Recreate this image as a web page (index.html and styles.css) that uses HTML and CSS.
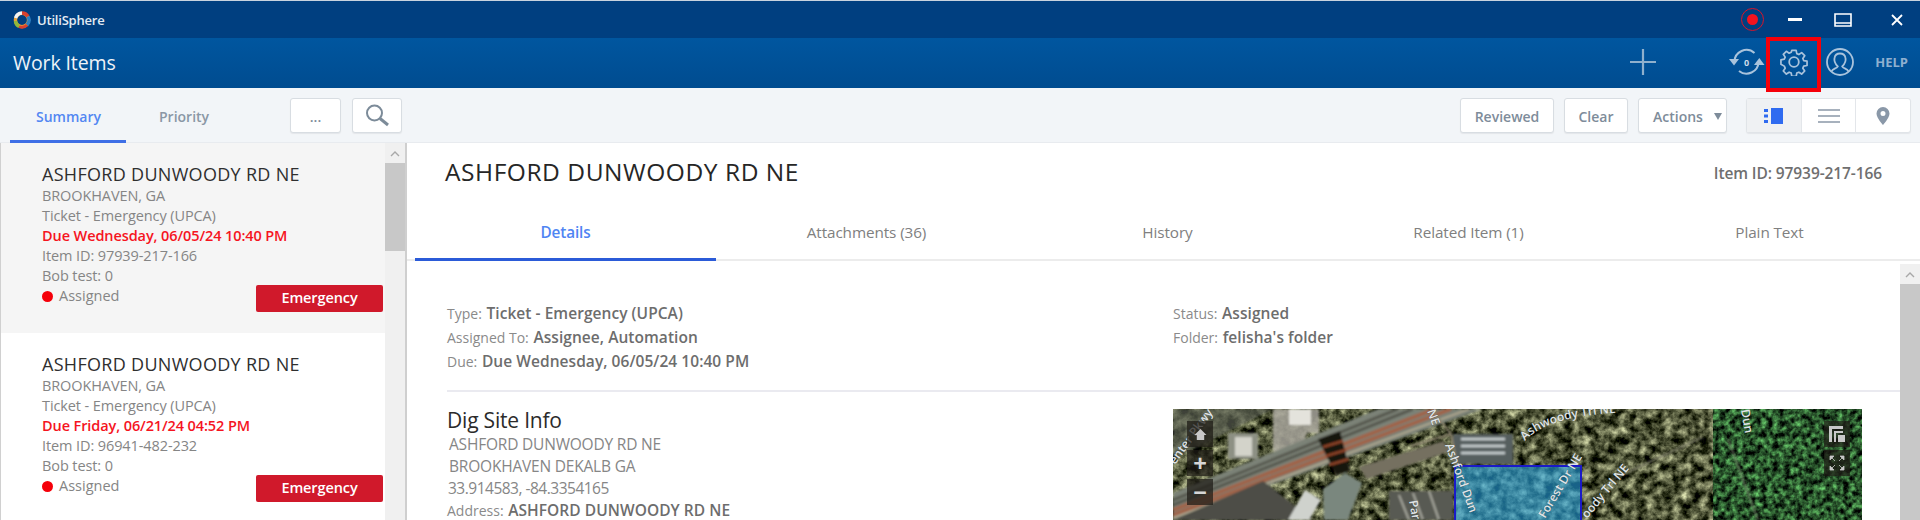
FILE: index.html
```html
<!DOCTYPE html>
<html lang="en">
<head>
<meta charset="utf-8">
<title>Work Items</title>
<link rel="stylesheet" href="styles.css">
</head>
<body>
<div class="app">
  <div class="titlebar">
    <svg class="logo" viewBox="0 0 20 20" width="20" height="20">
      <circle cx="10" cy="10" r="6.6" fill="none" stroke="#e8a33a" stroke-width="3.4"/>
      <path d="M3.6 8A7 7 0 0 1 10 3" fill="none" stroke="#f4f4f4" stroke-width="3.4"/>
      <path d="M10 3A7 7 0 0 1 16 6.5" fill="none" stroke="#d9402e" stroke-width="3.4"/>
      <path d="M16 6.5A7 7 0 0 1 15 15" fill="none" stroke="#2a7fc4" stroke-width="3.4"/>
      <path d="M15 15A7 7 0 0 1 7 16.5" fill="none" stroke="#d9402e" stroke-width="3"/>
      <path d="M7 16.5A7 7 0 0 1 3.4 11" fill="none" stroke="#8fb83a" stroke-width="3.4"/>
    </svg>
    <span class="brand">UtiliSphere</span>
    <span class="rec"><span class="rec-dot"></span></span>
    <span class="win-min"></span>
    <svg class="win-max" viewBox="0 0 18 14" width="18" height="14"><path d="M1 1h16v12H1zM1 10h16" fill="none" stroke="#fff" stroke-width="1.6"/></svg>
    <svg class="win-close" viewBox="0 0 12 12" width="12" height="12"><path d="M1 1l10 10M11 1L1 11" stroke="#fff" stroke-width="1.8" fill="none"/></svg>
  </div>

  <div class="header">
    <h1 class="page-title">Work Items</h1>
    <svg class="ico-plus" viewBox="0 0 26 26" width="26" height="26"><path d="M13 0v26M0 13h26" stroke="#8fb0cd" stroke-width="2.2" fill="none"/></svg>
    <svg class="ico-sync" viewBox="0 0 36 28" width="36" height="28">
      <path d="M5.500 14A12 12 0 0 1 25.500 5" fill="none" stroke="#a9c3dc" stroke-width="2"/>
      <path d="M29.500 14A12 12 0 0 1 10 23" fill="none" stroke="#a9c3dc" stroke-width="2"/>
      <path d="M0 11h10l-5 6.500z" fill="#a9c3dc"/>
      <path d="M25 17h10.500l-5.200-7z" fill="#a9c3dc"/>
      <text x="17.500" y="17.500" class="sync-num">0</text>
    </svg>
    <svg class="ico-gear" viewBox="0 0 28 28" width="28" height="28">
      <path d="M11.600 1h4.800l.7 3.700 2.300 1 3.100-2.100 3.400 3.400-2.100 3.100 1 2.300 3.700.7v4.800l-3.700.7-1 2.300 2.100 3.100-3.400 3.400-3.100-2.100-2.300 1-.7 3.700h-4.800l-.7-3.700-2.300-1-3.100 2.100-3.400-3.400 2.100-3.100-1-2.300L-.5 16.400v-4.800l3.700-.7 1-2.300L2.100 5.500l3.400-3.400 3.100 2.100 2.300-1z" transform="translate(1.400 1.400) scale(.9)" fill="none" stroke="#a9c3dc" stroke-width="1.900" stroke-linejoin="round"/>
      <circle cx="14" cy="14" r="4.800" fill="none" stroke="#a9c3dc" stroke-width="1.800"/>
    </svg>
    <svg class="ico-user" viewBox="0 0 28 28" width="28" height="28">
      <circle cx="14" cy="14" r="13" fill="none" stroke="#a9c3dc" stroke-width="1.800"/>
      <path d="M5.500 23.500c1-3 5.500-3 6.300-5-3-3-3.800-6-3.300-8.500C9 7 11 5.500 14 5.500s5 1.500 5.500 4.500c.5 2.500-.3 5.500-3.300 8.500.8 2 5.300 2 6.300 5" fill="none" stroke="#a9c3dc" stroke-width="1.800"/>
    </svg>
    <span class="help">HELP</span>
    <span class="annot"></span>
  </div>

  <div class="toolbar">
    <div class="left-tabs">
      <span class="ltab ltab-on">Summary</span>
      <span class="ltab">Priority</span>
    </div>
    <button class="btn btn-more">...</button>
    <button class="btn btn-search">
      <svg viewBox="0 0 26 26" width="26" height="26"><circle cx="10.500" cy="10" r="7.500" fill="none" stroke="#7c8b99" stroke-width="2"/><path d="M16 15.500l8 6.500" stroke="#7c8b99" stroke-width="3" fill="none"/></svg>
    </button>
    <div class="tool-right">
      <button class="btn btn-rev">Reviewed</button>
      <button class="btn btn-clear">Clear</button>
      <button class="btn btn-act">Actions <span class="caret"></span></button>
      <div class="seg">
        <span class="seg-i seg-on">
          <svg viewBox="0 0 20 16" width="20" height="16"><path d="M0 1h4v3H0zM0 6.500h4v3H0zM0 12h4v3H0zM7 0h12v16H7z" fill="#2f6bf0"/></svg>
        </span>
        <span class="seg-i">
          <svg viewBox="0 0 22 14" width="22" height="14"><path d="M0 1h22M0 7h22M0 13h22" stroke="#8a98a8" stroke-width="1.600" fill="none"/></svg>
        </span>
        <span class="seg-i">
          <svg viewBox="0 0 14 18" width="14" height="18"><path d="M7 0a6.500 6.500 0 0 0-6.500 6.500C.5 11 7 18 7 18s6.500-7 6.500-11.500A6.500 6.500 0 0 0 7 0zm0 9a2.500 2.500 0 1 1 0-5 2.500 2.500 0 0 1 0 5z" fill="#8a98a8"/></svg>
        </span>
      </div>
    </div>
  </div>

  <div class="main">
    <aside class="list">
      <div class="list-items">
        <article class="item item-on">
          <div class="item-title">ASHFORD DUNWOODY RD NE</div>
          <div class="item-line">BROOKHAVEN, GA</div>
          <div class="item-line">Ticket - Emergency (UPCA)</div>
          <div class="item-line item-due">Due Wednesday, 06/05/24 10:40 PM</div>
          <div class="item-line">Item ID: 97939-217-166</div>
          <div class="item-line">Bob test: 0</div>
          <div class="item-foot">
            <span class="status"><i class="dot"></i>Assigned</span>
            <span class="badge">Emergency</span>
          </div>
        </article>
        <article class="item item-second">
          <div class="item-title">ASHFORD DUNWOODY RD NE</div>
          <div class="item-line">BROOKHAVEN, GA</div>
          <div class="item-line">Ticket - Emergency (UPCA)</div>
          <div class="item-line item-due">Due Friday, 06/21/24 04:52 PM</div>
          <div class="item-line">Item ID: 96941-482-232</div>
          <div class="item-line">Bob test: 0</div>
          <div class="item-foot">
            <span class="status"><i class="dot"></i>Assigned</span>
            <span class="badge">Emergency</span>
          </div>
        </article>
      </div>
      <div class="vscroll vscroll-list">
        <svg class="chev" viewBox="0 0 10 6" width="10" height="6"><path d="M1 5l4-4 4 4" fill="none" stroke="#a8a8a8" stroke-width="1.400"/></svg>
        <div class="thumb thumb-list"></div>
      </div>
    </aside>

    <section class="detail">
      <div class="detail-head">
        <h2 class="detail-title">ASHFORD DUNWOODY RD NE</h2>
        <span class="detail-id">Item ID: 97939-217-166</span>
      </div>
      <nav class="dtabs">
        <span class="dtab dtab-on">Details</span>
        <span class="dtab">Attachments (36)</span>
        <span class="dtab">History</span>
        <span class="dtab">Related Item (1)</span>
        <span class="dtab">Plain Text</span>
      </nav>
      <div class="dbody">
        <div class="dcontent">
          <div class="info">
            <div>
              <p class="kv">Type: <b>Ticket - Emergency (UPCA)</b></p>
              <p class="kv">Assigned To: <b>Assignee, Automation</b></p>
              <p class="kv">Due: <b>Due Wednesday, 06/05/24 10:40 PM</b></p>
            </div>
            <div>
              <p class="kv">Status: <b>Assigned</b></p>
              <p class="kv">Folder: <b>felisha's folder</b></p>
            </div>
          </div>
          <div class="site">
            <div class="site-info">
              <h3 class="site-title">Dig Site Info</h3>
              <p class="addr">ASHFORD DUNWOODY RD NE</p>
              <p class="addr">BROOKHAVEN DEKALB GA</p>
              <p class="addr addr-c">33.914583, -84.3354165</p>
              <p class="kv kv-addr">Address: <b>ASHFORD DUNWOODY RD NE</b></p>
            </div>
            <div class="map">
              <svg class="map-svg" viewBox="0 0 689 111" width="689" height="111">
                <defs>
                  <filter id="veg" x="0" y="0" width="100%" height="100%" color-interpolation-filters="sRGB">
                    <feTurbulence type="fractalNoise" baseFrequency="0.11" numOctaves="4" seed="11"/>
                    <feColorMatrix type="matrix" values="1.300 0 0 0 -0.340  1.300 0 0 0 -0.320  1.100 0 0 0 -0.330  0 0 0 0 1"/>
                  </filter>
                  <filter id="forest" x="0" y="0" width="100%" height="100%" color-interpolation-filters="sRGB">
                    <feTurbulence type="fractalNoise" baseFrequency="0.17" numOctaves="3" seed="4"/>
                    <feColorMatrix type="matrix" values=".7 0 0 0 -0.190  1.300 0 0 0 -0.320  .7 0 0 0 -0.180  0 0 0 0 1"/>
                  </filter>
                  <filter id="soft"><feGaussianBlur stdDeviation=".9"/></filter>
                  <path id="curve" d="M352 32Q375 6 456 3"/>
                </defs>
                <rect width="689" height="111" filter="url(#veg)"/>
                <rect x="540" width="149" height="111" filter="url(#forest)"/>
                <g filter="url(#soft)">
                  <path d="M0 0h100L0 50z" fill="#5a5e52" opacity=".7"/>
                  <path d="M100 0h46v24h-12l-6 18h-28z" fill="#a8a69c" opacity=".85"/>
                  <path d="M116 0h22v16h-22z" fill="#e4e3dc"/>
                  <path d="M55 24h30v26H55z" fill="#8d9084"/>
                  <path d="M62 28h17v19H62z" fill="#d3d3ca"/>
                  <path d="M0 84L205 0h105L0 111z" fill="#7c8277"/>
                  <path d="M0 91L225 0M0 96L240 0" stroke="#56594f" stroke-width="3" fill="none"/>
                  <path d="M0 101L262 0M0 106L278 0" stroke="#a0644a" stroke-width="4" fill="none"/>
                  <path d="M0 109L296 0" stroke="#b7ad94" stroke-width="1.500" fill="none"/>
                  <path d="M145 30l22-8 10 40-14 4z" fill="#18130f"/>
                  <path d="M150 38l20-6M153 47l20-6M156 56l20-6" stroke="#8d4328" stroke-width="2.500"/>
                  <path d="M280 25h60v30h-60z" fill="#565f5e"/>
                  <path d="M288 30h44M288 37h44M288 44h44" stroke="#c9d0d2" stroke-width="2.500"/>
                  <path d="M0 111L90 72l50 39z" fill="#4d4e46"/>
                  <path d="M150 80l22-16 17 10-14 37h-24z" fill="#7a877e"/>
                  <path d="M115 111l17-30 16 10-12 20z" fill="#cfd2cd"/>
                  <path d="M186 58l84-26 8 10-84 28z" fill="#757060"/>
                  <path d="M216 82h64v29h-64z" fill="#595a52"/>
                  <path d="M226 86l10 25M240 84l10 27M256 82l10 29" stroke="#a8a99f" stroke-width="2"/>
                  <path d="M258 0l20 25 6 33M278 25l-40 12" stroke="#8d8570" stroke-width="2" fill="none"/>
                  <path d="M555 30l30 81" stroke="#6c7a62" stroke-width="1.500" fill="none"/>
                  <path d="M440 70l90-42" stroke="#7b7b68" stroke-width="1.500" fill="none"/>
                </g>
                <rect x="282" y="57" width="126" height="70" fill="#28a4e2" fill-opacity=".6" stroke="#1a1ac8" stroke-width="2"/>
                <g class="map-labels">
                  <text transform="translate(2 56) rotate(-54)">enter Pkwy</text>
                  <text transform="translate(254 2) rotate(70)">NE</text>
                  <text transform="translate(272 36) rotate(70)">Ashford Dun</text>
                  <text><textPath href="#curve">Ashwoody Trl NE</textPath></text>
                  <text transform="translate(372 110) rotate(-59)">Forest Dr NE</text>
                  <text transform="translate(414 110) rotate(-50)">oody Trl NE</text>
                  <text transform="translate(568 1) rotate(80)">Dun</text>
                  <text transform="translate(236 92) rotate(80)">Par</text>
                </g>
              </svg>
              <div class="mctl mctl-l">
                <span class="mbtn">
                  <svg viewBox="0 0 14 14" width="13" height="13"><path d="M7 1L0.500 7.500H3V13h8V7.500h2.500z" fill="#c8c8c8"/></svg>
                </span>
                <span class="mbtn mbtn-t">+</span>
                <span class="mbtn mbtn-t">−</span>
              </div>
              <div class="mctl mctl-r">
                <span class="mbtn">
                  <svg viewBox="0 0 16 16" width="16" height="16"><path d="M0 0h14v3H3v13H0zM5 5h9v2H7v9H5zM9 9h7v7H9z" fill="#c8c8c8"/></svg>
                </span>
                <span class="mbtn">
                  <svg viewBox="0 0 16 16" width="16" height="16"><path d="M1 1h4L1 5zM6 6L3 3M15 1v4l-4-4zM10 6l3-3M1 15v-4l4 4zM6 10l-3 3M15 15h-4l4-4zM10 10l3 3" fill="#c8c8c8" stroke="#c8c8c8" stroke-width=".8"/></svg>
                </span>
              </div>
            </div>
          </div>
        </div>
        <div class="vscroll vscroll-body">
          <svg class="chev" viewBox="0 0 10 6" width="10" height="6"><path d="M1 5l4-4 4 4" fill="none" stroke="#a8a8a8" stroke-width="1.400"/></svg>
          <div class="thumb thumb-body"></div>
        </div>
      </div>
    </section>
  </div>
</div>
</body>
</html>
```

FILE: styles.css
```css
* { box-sizing: border-box; }
html, body { margin: 0; padding: 0; }
body { background: #fff; font-family: "Open Sans", "Noto Sans", sans-serif; color: #7d7d7d; }
p, h1, h2, h3 { margin: 0; font-weight: 400; }
.app { width: 1920px; height: 520px; overflow: hidden; display: flex; flex-direction: column; }

.titlebar { height: 38px; flex: none; display: flex; align-items: center; background: #003f80; border-top: 1px solid #c8d3df; padding-left: 12px; }
.logo { flex: none; margin-right: 5px; }
.brand { color: #e4ebf3; font-size: 13px; font-weight: 600; letter-spacing: -.2px; }
.rec { margin-left: auto; width: 23px; height: 23px; border: 1.500px solid #d8142a; border-radius: 50%; display: flex; align-items: center; justify-content: center; margin-right: 24px; }
.rec-dot { width: 11px; height: 11px; border-radius: 50%; background: #f5131f; }
.win-min { width: 14px; height: 3px; background: #fff; margin-right: 32px; }
.win-max { margin-right: 39px; }
.win-close { margin-right: 17px; }

.header { position: relative; height: 50px; flex: none; display: flex; align-items: center; background: linear-gradient(#00569f, #004c90); padding-left: 13px; padding-bottom: 2px; }
.page-title { color: #eef3f8; font-size: 19.500px; letter-spacing: -.1px; }
.ico-plus { margin-left: auto; }
.ico-sync { margin-left: 73px; }
.ico-gear { margin-left: 15px; }
.ico-user { margin-left: 18px; }
.help { color: #8fb0d0; font-size: 13px; font-weight: 700; margin-left: 21px; margin-right: 12px; }
.sync-num { font: 700 9px "Open Sans", sans-serif; fill: #cddcea; text-anchor: middle; }
.annot { position: absolute; left: 1766px; top: -1px; width: 55px; height: 55px; border: 4px solid #f5000a; }

.toolbar { height: 55px; flex: none; display: flex; align-items: flex-start; background: #f2f5f8; border-bottom: 1px solid #e8ebef; padding: 10px 9px 0 10px; }
.left-tabs { display: flex; width: 280px; height: 45px; }
.ltab { height: 45px; line-height: 38px; font-size: 14px; font-weight: 600; color: #8a97a5; margin-left: 33px; }
.ltab-on { width: 116px; margin-left: 0; padding-left: 26px; color: #5287f2; border-bottom: 3px solid #3f6fe6; }
.btn { height: 35px; background: #fff; border: 1px solid #d8dde2; border-radius: 3px; box-shadow: 0 1px 1px #e3e6e9; font: 600 14px "Open Sans", sans-serif; color: #7e8c9a; padding: 2px 0 0; }
.btn-more { width: 51px; margin-right: 11px; line-height: 28px; }
.btn-search { width: 50px; display: flex; align-items: center; justify-content: center; padding: 0; }
.tool-right { margin-left: auto; display: flex; }
.btn-rev { width: 94px; margin-right: 10px; }
.btn-clear { width: 64px; margin-right: 10px; }
.btn-act { width: 89px; margin-right: 19px; text-align: left; padding-left: 14px; }
.caret { display: inline-block; width: 0; height: 0; margin-left: 7px; vertical-align: 2px; border-left: 4px solid transparent; border-right: 4px solid transparent; border-top: 7px solid #7e8c9a; }
.seg { width: 165px; height: 35px; display: flex; background: #fff; border: 1px solid #e0e4e8; border-radius: 3px; box-shadow: 0 1px 1px #e3e6e9; }
.seg-i { flex: 1; display: flex; align-items: center; justify-content: center; border-left: 1px solid #e3e6ea; }
.seg-i:first-child { border-left: 0; }
.seg-on { background: #eff1f3; }

.main { flex: 1; display: flex; min-height: 0; }
.list { width: 407px; flex: none; display: flex; border-left: 1px solid #d0d0d0; border-right: 2px solid #cfcfcf; }
.list-items { flex: 1; min-width: 0; }
.item { padding: 19px 0 0 41px; height: 190px; margin-bottom: 1px; }
.item-on { background: #f5f5f5; }
.item-second { padding-top: 18px; }
.item-title { height: 24px; line-height: 24px; font-size: 18px; font-weight: 500; color: #2f2f2f; letter-spacing: .3px; }
.item-line { height: 20px; line-height: 20px; font-size: 14.500px; color: #858585; letter-spacing: -.1px; }
.item-due { color: #f5141e; font-weight: 600; }
.item-foot { display: flex; justify-content: space-between; height: 20px; padding-right: 2px; }
.status { line-height: 20px; font-size: 14.500px; color: #858585; }
.dot { display: inline-block; width: 11px; height: 11px; border-radius: 50%; background: #f5000a; margin-right: 6px; vertical-align: -1px; }
.badge { width: 127px; height: 27px; flex: none; margin-top: -1px; background: #d0192b; border-radius: 2px; color: #fff; font-size: 14.500px; font-weight: 600; text-align: center; line-height: 26px; letter-spacing: -.1px; }

.vscroll { width: 20px; flex: none; background: #f0f0f0; display: flex; flex-direction: column; align-items: center; }
.chev { flex: none; margin: 8px 0 6px; }
.thumb { width: 100%; background: #c8c8c8; }
.thumb-list { height: 88px; }
.thumb-body { flex: 1; }
.vscroll-body { margin-top: 3px; }

.detail { flex: 1; min-width: 0; display: flex; flex-direction: column; }
.detail-head { height: 76px; flex: none; display: flex; justify-content: space-between; align-items: flex-start; padding: 12px 38px 0 38px; }
.detail-title { font-size: 24.500px; line-height: 34px; color: #262626; letter-spacing: .55px; }
.detail-id { font-size: 15.500px; font-weight: 600; line-height: 34px; color: #6f6f6f; letter-spacing: -.1px; margin-top: 1px; }
.dtabs { height: 42px; flex: none; display: flex; padding-left: 8px; border-bottom: 2px solid #ececec; }
.dtab { width: 301px; text-align: center; font-size: 15.300px; line-height: 26px; color: #808080; letter-spacing: -.1px; }
.dtab-on { color: #4f85f3; font-weight: 600; height: 42px; border-bottom: 3px solid #2b5bd8; }
.dbody { flex: 1; min-height: 0; display: flex; }
.dcontent { flex: 1; min-width: 0; padding: 40px 0 0 40px; }
.info { display: grid; grid-template-columns: 726px 1fr; height: 91px; border-bottom: 2px solid #eaeaf0; }
.kv { font-size: 14px; line-height: 24px; height: 24px; color: #8a8a8a; }
.kv b { font-size: 15.500px; font-weight: 600; color: #6d6d6d; margin-left: 1px; letter-spacing: .05px; }
.site { display: grid; grid-template-columns: 726px 689px; padding-top: 17px; }
.site-title { font-size: 21px; line-height: 24px; color: #2b2b2b; letter-spacing: -.2px; margin: -1px 0 1px; }
.addr { font-size: 15.500px; line-height: 22px; color: #868686; padding-left: 2px; letter-spacing: -.2px; }
.addr-c { padding-left: 1px; letter-spacing: -.5px; }
.kv-addr { line-height: 23px; height: 23px; }

.map { position: relative; width: 689px; height: 111px; overflow: hidden; }
.map-svg { display: block; }
.map-labels text { font: 600 12px "Open Sans", sans-serif; fill: #dfe3e6; stroke: #2a2a2a; stroke-width: .3px; paint-order: stroke; }
.mctl { position: absolute; top: 12px; display: flex; flex-direction: column; gap: 3px; }
.mctl-l { left: 14px; }
.mctl-r { right: 12px; }
.mbtn { width: 26px; height: 26px; display: flex; align-items: center; justify-content: center; background: rgba(30, 28, 22, .72); color: #d6d6d6; }
.mbtn-t { font: 700 24px/24px "Open Sans", sans-serif; }
```
